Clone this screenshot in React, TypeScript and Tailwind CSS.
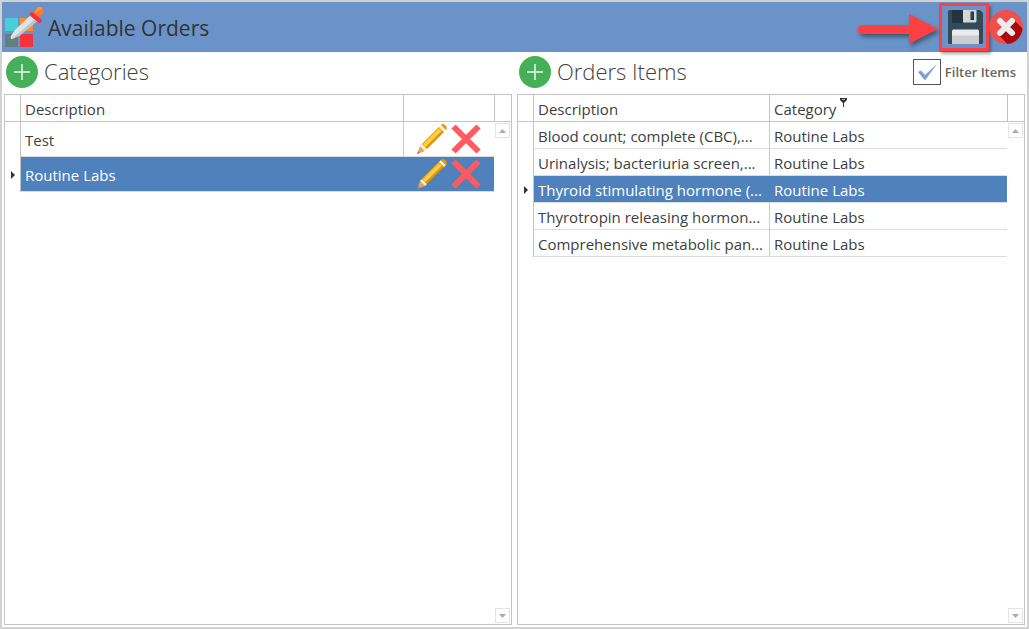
import { useState } from "react";
import type { ReactNode } from "react";

const CATEGORIES = ["Test", "Routine Labs"];

const ORDER_ITEMS = [
  { description: "Blood count; complete (CBC),...", category: "Routine Labs" },
  { description: "Urinalysis; bacteriuria screen,...", category: "Routine Labs" },
  { description: "Thyroid stimulating hormone (...", category: "Routine Labs" },
  { description: "Thyrotropin releasing hormon...", category: "Routine Labs" },
  { description: "Comprehensive metabolic pan...", category: "Routine Labs" },
];

function SwatchIcon() {
  return (
    <svg viewBox="0 0 42 44" className="w-[42px] h-[44px]" aria-hidden="true">
      <rect x="1" y="13" width="13" height="13" rx="0.500" fill="#46cfd8" />
      <rect x="16" y="13" width="13" height="13" rx="0.500" fill="#ff8b2c" />
      <rect x="1" y="29" width="13" height="13" rx="0.500" fill="#657f80" />
      <rect x="16" y="29" width="13" height="13" rx="0.500" fill="#f4343d" />
      <path d="M27 10 33.500 16 15.500 31 8.500 34Q6 33.500 7 31L11 25z" fill="#bcc7cd" />
      <path d="M27 10 31 14 8 34Q6 33.500 7 31L11 25z" fill="#dde4e7" />
      <path d="M29.500 8 33 3Q35.500 1 38.500 3 40.500 6 38 9L34.500 12.500z" fill="#ff7a24" />
      <path d="M31 6.500 33 3Q35.500 1 38.500 3L32 8z" fill="#ff9440" />
      <path d="m28 9.500 7.500 6" stroke="#f4343d" strokeWidth="4.500" strokeLinecap="round" />
    </svg>
  );
}

function SaveIcon() {
  return (
    <svg viewBox="0 0 35 34" className="w-[35px] h-[34px]" aria-hidden="true">
      <path d="M1 0H32L35 3V33L34 34H1L0 33V1z" fill="#324a5a" />
      <path d="M4 0H16V13H5L4 12z" fill="#223440" />
      <path d="M15 0H28.500V11.500L27.500 12.500H15z" fill="#d3d6d9" />
      <rect x="22.500" y="1.500" width="3.500" height="8.500" fill="#223440" />
      <rect x="23.500" y="2.500" width="1" height="6" fill="#3d5565" />
      <path d="M5 19.500H30L31 20.500V34H4V20.500z" fill="#e8eaec" />
      <path d="M4 25.500H31V34H4z" fill="#cacdcf" />
    </svg>
  );
}

function CloseIcon() {
  return (
    <svg viewBox="0 0 34 34" className="w-[34px] h-[34px]" aria-hidden="true">
      <circle cx="17" cy="17" r="17" fill="#f0504a" />
      <path d="M25 10 33.500 18.500A17 17 0 0 1 18.500 34L9 24.500z" fill="#a90a0d" />
      <path d="m11 11 12 12M23 11 11 23" stroke="#ececf0" strokeWidth="6" strokeLinecap="round" />
    </svg>
  );
}

function PencilIcon() {
  return (
    <svg viewBox="0 0 30 30" className="w-[30px] h-[30px]" aria-hidden="true">
      <path d="M0 30 3 22 8 27z" fill="#e2a36c" />
      <path d="M0 30 1 27 3 29z" fill="#9a8478" />
      <path d="M3 22 5 20 10 25 8 27z" fill="#f7efc8" />
      <path d="M5 20 22 3 27 8 10 25z" fill="#dd9108" />
      <path d="M5 20 22 3 25.500 6.500 8.500 23.500z" fill="#f7b21c" />
      <path d="M6 21 22 5 24 7 8 23z" fill="#ffcf48" />
      <path d="m22 3 2-2 5 5-2 2z" fill="#f7efc8" />
      <path d="M24 1Q26-1 28.500 1.500T29 6z" fill="#e59a0c" />
    </svg>
  );
}

function DeleteIcon() {
  return (
    <svg viewBox="0 0 30 30" className="w-[30px] h-[30px]" aria-hidden="true">
      <path d="m2.500 2.500 25 25M27.500 2.500l-25 25" stroke="#ff5a5f" strokeWidth="6" />
    </svg>
  );
}

function AddButton({ label }: { label: string }) {
  return (
    <button type="button" aria-label={label} className="w-8 h-8 rounded-full bg-[#45b058] flex items-center justify-center">
      <svg viewBox="0 0 32 32" className="w-8 h-8" aria-hidden="true">
        <path d="M16 8v16M8 16h16" stroke="#e8f7ea" strokeWidth="1.500" />
      </svg>
    </button>
  );
}

function ScrollButton({ up }: { up?: boolean }) {
  return (
    <button type="button" aria-label={up ? "Scroll up" : "Scroll down"} className="w-[15px] h-[15px] border border-[#e4e4e4] flex items-center justify-center">
      <svg viewBox="0 0 7 4" className="w-[7px] h-[4px]" aria-hidden="true">
        <path d={up ? "M0 4 3.500 0 7 4z" : "M0 0H7L3.500 4z"} fill="#acacac" />
      </svg>
    </button>
  );
}

// Grid frame with the scroll bar column on the right
function GridPanel({ children }: { children: ReactNode }) {
  return (
    <div className="flex-1 min-h-0 flex border border-[#c4c4c4]">
      <div className="flex-1 min-w-0">{children}</div>
      <div className="w-[17px] flex flex-col">
        <div className="h-[27px] border-l border-b border-[#c4c4c4]" />
        <div className="flex-1 flex flex-col items-center justify-between py-px">
          <ScrollButton up />
          <ScrollButton />
        </div>
      </div>
    </div>
  );
}

function RowMarker({ active }: { active: boolean }) {
  return (
    <td className="p-0 border-r border-[#c4c4c4]">
      {active && (
        <svg viewBox="0 0 4 8" className="w-1 h-2 ml-[6px]" aria-hidden="true">
          <path d="M0 0 4 4 0 8z" fill="#333" />
        </svg>
      )}
    </td>
  );
}

const TABLE = "w-full table-fixed border-separate border-spacing-0 text-[15px] leading-5";
const TH = "p-0 pl-1 pt-[2px] text-left font-normal border-b border-[#c4c4c4]";
const TD = "p-0 pl-1 pt-[2px] whitespace-nowrap border-b border-b-[#dcdcdc]";

export default function App() {
  const [category, setCategory] = useState(1);
  const [item, setItem] = useState(2);
  const [filter, setFilter] = useState(true);

  return (
    <div className="h-screen flex flex-col bg-white border-2 border-[#d2d2d2] font-['Open_Sans','Noto_Sans',sans-serif] text-[#404040]">
      <header className="h-[50px] shrink-0 bg-[#6a94c9] flex items-center pl-[2px] pr-1">
        <SwatchIcon />
        <h1 className="ml-[2px] flex-1 pt-[2px] text-[21px] leading-7 text-[#333]">Available Orders</h1>
        <svg viewBox="0 0 82 34" className="w-[82px] h-[34px] overflow-visible drop-shadow-[2px_3px_2px_rgba(0,0,0,0.4)]" aria-hidden="true">
          <path d="M5 15H52V4L81 19 52 34V24H5A4 4 0 0 1 5 15z" fill="#fb4144" />
        </svg>
        <button type="button" aria-label="Save" className="w-[50px] h-[48px] pl-[3px] border-3 border-[#fb4144] flex items-center justify-center shadow-[2px_3px_3px_rgba(0,0,0,0.35)]">
          <SaveIcon />
        </button>
        <button type="button" aria-label="Close">
          <CloseIcon />
        </button>
      </header>

      <main className="flex-1 min-h-0 flex gap-[5px] px-[2px] pb-[2px]">
        <section className="flex-1 min-w-0 flex flex-col">
          <div className="h-[42px] flex items-center gap-[6px] pl-[2px] pb-[2px]">
            <AddButton label="Add category" />
            <h2 className="text-[22px] leading-[30px] pb-[2px] font-light">Categories</h2>
          </div>
          <GridPanel>
            <table className={TABLE}>
              <thead>
                <tr className="h-[27px]">
                  <th className="w-4 p-0 border-r border-b border-[#c4c4c4]" />
                  <th className={`${TH} border-r`}>Description</th>
                  <th className={`${TH} w-[90px]`} />
                </tr>
              </thead>
              <tbody>
                {CATEGORIES.map((name, i) => (
                  <tr key={name} onClick={() => setCategory(i)} className="h-[35px]">
                    <RowMarker active={i === category} />
                    <td className={`${TD} ${i === category ? "bg-[#4f81bd] text-white" : "border-r border-r-[#c5cbd8]"}`}>{name}</td>
                    <td className={`p-0 border-b border-b-[#dcdcdc] ${i === category ? "bg-[#4f81bd]" : ""}`}>
                      <div className="flex gap-1 pl-[13px]">
                        <button type="button" aria-label={`Edit ${name}`}><PencilIcon /></button>
                        <button type="button" aria-label={`Delete ${name}`}><DeleteIcon /></button>
                      </div>
                    </td>
                  </tr>
                ))}
              </tbody>
            </table>
          </GridPanel>
        </section>

        <section className="flex-1 min-w-0 flex flex-col">
          <div className="h-[42px] flex items-center gap-[6px] pl-[2px] pr-2 pb-[2px]">
            <AddButton label="Add order item" />
            <h2 className="flex-1 text-[22px] leading-[30px] pb-[2px] font-light">Orders Items</h2>
            <label className="flex items-center gap-1 pr-px text-[13px] leading-5 font-semibold text-[#666]">
              <span className="relative flex">
                <input type="checkbox" checked={filter} onChange={(e) => setFilter(e.target.checked)} className="appearance-none w-7 h-[26px] border border-[#555] bg-white" />
                {filter && (
                  <svg viewBox="0 0 28 26" className="absolute inset-0 w-7 h-[26px] pointer-events-none" aria-hidden="true">
                    <path d="M5 13 8 11.500 12 16 24 5 12 21.500z" fill="#7ba0d4" />
                  </svg>
                )}
              </span>
              Filter Items
            </label>
          </div>
          <GridPanel>
            <table className={TABLE}>
              <thead>
                <tr className="h-[27px]">
                  <th className="w-4 p-0 border-r border-b border-[#c4c4c4]" />
                  <th className={`${TH} w-[236px] border-r`}>Description</th>
                  <th className={TH}>
                    <span className="relative">
                      Category
                      <svg viewBox="0 0 7 9" className="absolute left-full -top-px ml-1 w-[7px] h-[9px]" aria-hidden="true">
                        <path d="M0 0H7V2L4 5V9H3V5L0 2z" fill="#333" />
                        <path d="M2 1.500H5" stroke="#bbb" strokeWidth="1" />
                      </svg>
                    </span>
                  </th>
                </tr>
              </thead>
              <tbody>
                {ORDER_ITEMS.map((row, i) => (
                  <tr key={row.description} onClick={() => setItem(i)} className="h-[27px]">
                    <RowMarker active={i === item} />
                    <td className={`${TD} ${i === item ? "bg-[#4f81bd] text-white" : "border-r border-r-[#c5cbd8]"}`}>{row.description}</td>
                    <td className={`${TD} ${i === item ? "bg-[#4f81bd] text-white" : ""}`}>{row.category}</td>
                  </tr>
                ))}
              </tbody>
            </table>
          </GridPanel>
        </section>
      </main>
    </div>
  );
}
